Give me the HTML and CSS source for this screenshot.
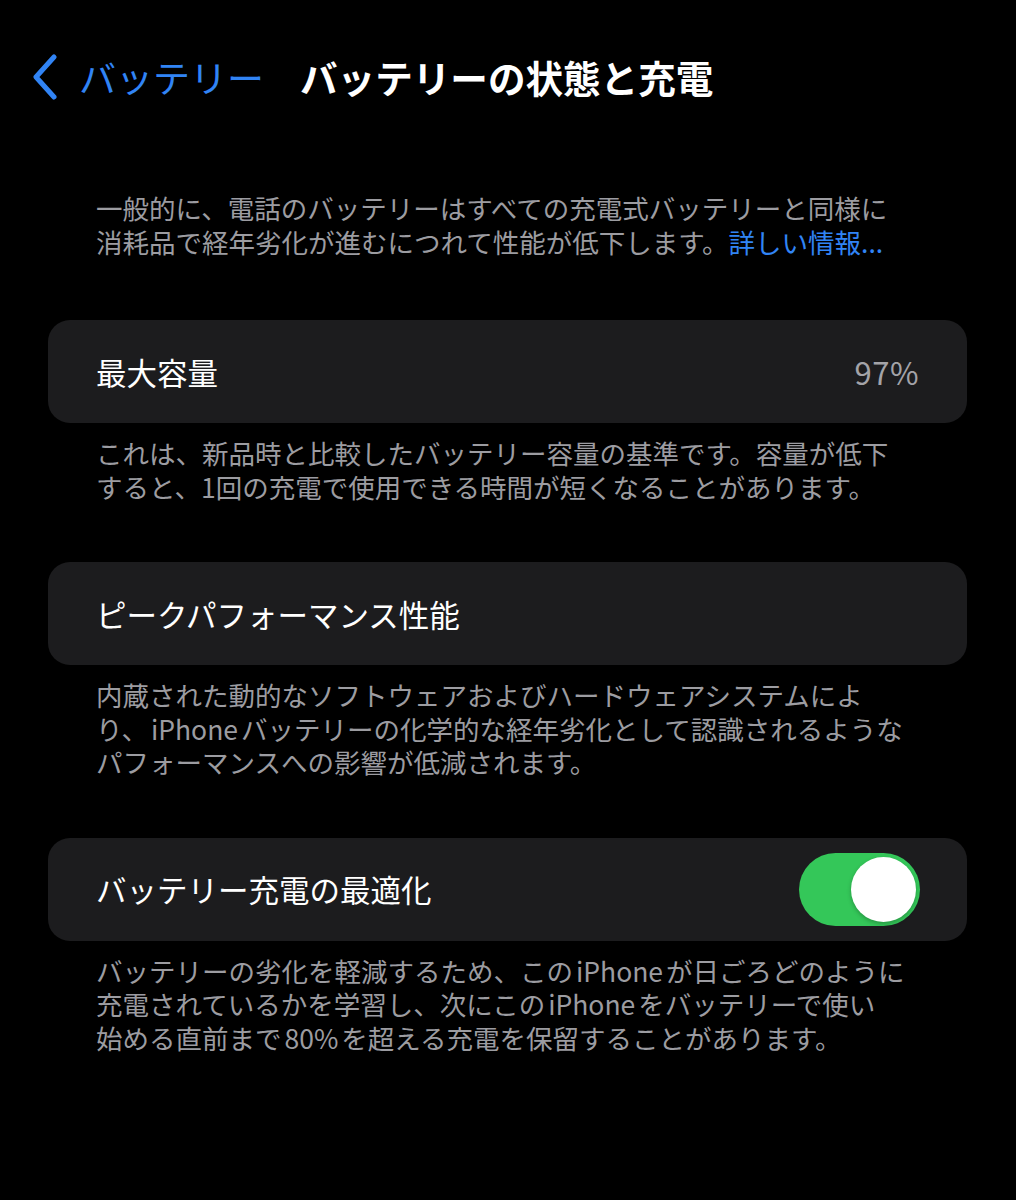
FILE: index.html
```html
<!DOCTYPE html>
<html lang="ja">
<head>
<meta charset="utf-8">
<link rel="stylesheet" href="styles.css">
</head>
<body>
<div class="screen">
  <header class="nav">
    <div class="back">
      <svg class="chev" width="28" height="46" viewBox="0 0 28 46"><path d="M23 3 L5 23 L23 43" fill="none" stroke="#3184f5" stroke-width="5" stroke-linecap="round" stroke-linejoin="round"/></svg>
      <span class="back-label">バッテリー</span>
    </div>
    <h1 class="title">バッテリーの状態と充電</h1>
  </header>

  <p class="note intro">一般的に、電話のバッテリーはすべての充電式バッテリーと同様に<br>消耗品で経年劣化が進むにつれて性能が低下します。<span class="link">詳しい情報...</span></p>

  <div class="card"><span class="label">最大容量</span><span class="value">97%</span></div>
  <p class="note">これは、新品時と比較したバッテリー容量の基準です。容量が低下<br>すると、1回の充電で使用できる時間が短くなることがあります。</p>

  <div class="card"><span class="label">ピークパフォーマンス性能</span></div>
  <p class="note">内蔵された動的なソフトウェアおよびハードウェアシステムによ<br>り、<span class="lat">iPhone</span>バッテリーの化学的な経年劣化として認識されるような<br>パフォーマンスへの影響が低減されます。</p>

  <div class="card"><span class="label">バッテリー充電の最適化</span><span class="toggle"><span class="knob"></span></span></div>
  <p class="note">バッテリーの劣化を軽減するため、この<span class="lat">iPhone</span>が日ごろどのように<br>充電されているかを学習し、次にこの<span class="lat">iPhone</span>をバッテリーで使い<br>始める直前まで<span class="lat">80%</span>を超える充電を保留することがあります。</p>
</div>
</body>
</html>
```

FILE: styles.css
```css
html, body {
  margin: 0;
  padding: 0;
  background: #000;
}
body {
  font-family: "Noto Sans CJK JP", "Noto Sans", sans-serif;
  color: #fff;
  width: 1016px;
  height: 1200px;
  overflow: hidden;
}
.screen {
  padding: 0 49px 0 48px;
}
.nav {
  display: flex;
  align-items: center;
  height: 50px;
  margin-top: 52px;
}
.back {
  display: flex;
  align-items: center;
}
.chev {
  margin-left: -17px;
  margin-right: 20px;
}
.back-label {
  color: #3184f5;
  font-size: 37px;
  line-height: 50px;
}
.title {
  margin: 0 0 0 36px;
  font-size: 37.6px;
  font-weight: 700;
  line-height: 50px;
}
.note {
  margin: 0;
  padding: 13px 48px 59px;
  color: #9c9ca1;
  font-size: 26.5px;
  line-height: 33.5px;
  white-space: nowrap;
}
.note.intro {
  padding-top: 89px;
  padding-bottom: 62px;
}
.lat {
  margin: 0 3px;
}
.link {
  color: #3184f5;
}
.card {
  background: #1c1c1e;
  border-radius: 22px;
  height: 103px;
  display: flex;
  align-items: center;
  justify-content: space-between;
  padding: 0 48px;
  box-sizing: border-box;
}
.label {
  font-size: 30.5px;
  line-height: 40px;
  color: #fff;
}
.value {
  font-size: 31px;
  line-height: 40px;
  letter-spacing: 0.5px;
  color: #a3a3a8;
}
.toggle {
  width: 121px;
  height: 73px;
  border-radius: 37px;
  background: #34c759;
  margin-right: -1px;
  display: flex;
  align-items: center;
  justify-content: flex-end;
  padding-right: 4px;
  box-sizing: border-box;
}
.knob {
  width: 65px;
  height: 65px;
  border-radius: 50%;
  background: #fff;
  box-shadow: 0 2px 4px rgba(0,0,0,0.25);
}
```
